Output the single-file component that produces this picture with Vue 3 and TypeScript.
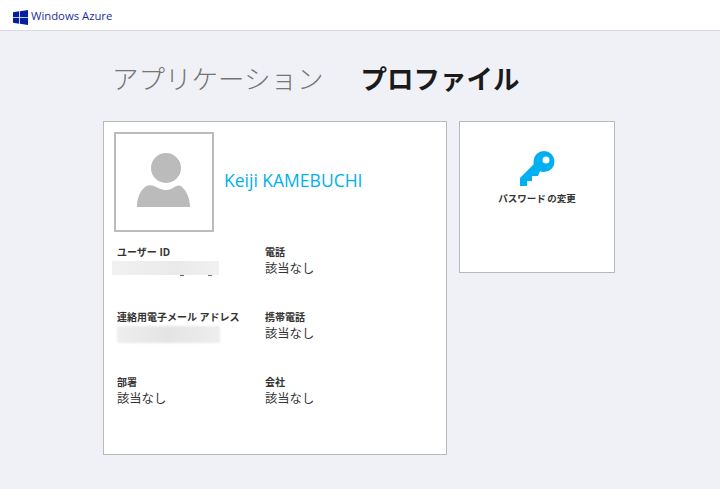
<script setup lang="ts">
interface Field {
  label: string
  value?: string
  redacted?: 'id' | 'mail'
}

const fields: Field[] = [
  { label: 'ユーザー ID', redacted: 'id' },
  { label: '電話', value: '該当なし' },
  { label: '連絡用電子メール アドレス', redacted: 'mail' },
  { label: '携帯電話', value: '該当なし' },
  { label: '部署', value: '該当なし' },
  { label: '会社', value: '該当なし' },
]
</script>

<template>
  <div class="page">
    <header class="topbar">
      <svg class="logo" viewBox="0 0 15 15" width="15" height="15">
        <path d="M0 2.200 6.200 1.300V7H0ZM7 1.200 15 0V7H7ZM0 7.800H6.200V13.700L0 12.800ZM7 7.800H15V15L7 13.800Z" fill="#00209f" />
      </svg>
      <span class="brand">Windows Azure</span>
    </header>

    <main class="content">
      <nav class="tabs">
        <span class="tab">アプリケーション</span>
        <span class="tab active">プロファイル</span>
      </nav>

      <div class="cards">
        <section class="card profile">
          <div class="identity">
            <div class="avatar">
              <svg viewBox="0 0 54 54" width="54" height="54">
                <circle cx="29" cy="15" r="15" fill="#bbb" />
                <path d="M0 54C0 45 3 38 8 34C11 32 14 32 17 33C21 35 25 37 29 37C33 37 36 35 39 33C42 32 44 32 46 35C50 39 53 46 53 54Z" fill="#bbb" />
              </svg>
            </div>
            <span class="name">Keiji KAMEBUCHI</span>
          </div>

          <dl class="fields">
            <div v-for="field in fields" :key="field.label" class="field">
              <dt>{{ field.label }}</dt>
              <dd v-if="field.redacted" :class="['redacted', field.redacted]"></dd>
              <dd v-else>{{ field.value }}</dd>
            </div>
          </dl>
        </section>

        <section class="card action">
          <svg class="key" viewBox="0 0 35 35" width="35" height="35">
            <path fill-rule="evenodd" d="M24 0A10.500 10.500 0 1 1 24 21C22.500 21 21 20.700 20 20.200L18 25H12V30H7V35H0V27L13.700 13.300C13.500 12.400 13.500 11.400 13.500 10.500A10.500 10.500 0 0 1 24 0ZM26 5.500A3.500 3.500 0 1 0 26 12.500A3.500 3.500 0 1 0 26 5.500Z" fill="#00b0f0" />
          </svg>
          <span class="action-label">パスワード の変更</span>
        </section>
      </div>
    </main>
  </div>
</template>

<style scoped>
.page {
  min-height: 489px;
  background: #f0f1f6;
  font-family: "Open Sans", "Noto Sans CJK JP", sans-serif;
  color: #333;
}

.topbar {
  display: flex;
  align-items: center;
  height: 30px;
  padding-left: 13px;
  background: #fff;
  border-bottom: 1px solid #d9dde3;
}

.logo {
  margin: 4px 3px 0 0;
}

.brand {
  font-size: 11.300px;
  color: #1a2f9c;
}

.content {
  padding: 30px 0 0 103px;
}

.tabs {
  display: flex;
  gap: 37px;
  padding-left: 9px;
  height: 60px;
  font-size: 26.500px;
  line-height: 36px;
}

.tab {
  color: #757575;
  font-weight: 300;
}

.tab.active {
  color: #1a1a1a;
  font-weight: 700;
}

.cards {
  display: flex;
  align-items: flex-start;
  gap: 12px;
}

.card {
  box-sizing: border-box;
  background: #fff;
  border: 1px solid #b9b9bd;
}

.profile {
  width: 344px;
  height: 334px;
  padding: 10px;
}

.identity {
  display: flex;
  align-items: center;
  gap: 10px;
}

.avatar {
  box-sizing: border-box;
  display: flex;
  align-items: center;
  justify-content: center;
  width: 100px;
  height: 100px;
  padding-bottom: 4px;
  border: 2px solid #bbb;
}

.name {
  margin-bottom: 4px;
  font-size: 17.500px;
  color: #00b0f0;
}

.fields {
  display: grid;
  grid-template-columns: 148px 1fr;
  grid-auto-rows: 65px;
  margin: 13px 0 0 3px;
}

.field dt {
  font-size: 10px;
  line-height: 14px;
  font-weight: 700;
  color: #333;
}

.field dd {
  margin: 2px 0 0;
  font-size: 12.300px;
  line-height: 16px;
  color: #333;
}

.field dd.redacted {
  position: relative;
  height: 14px;
  background: linear-gradient(90deg, #f1f1f1, #eaeaea 60%, #f1f1f1);
}

.field dd.redacted.id {
  width: 107px;
  margin: 2px 0 0 -5px;
}

/* leftover bits of the blurred address */
.field dd.redacted.id::after {
  content: "";
  position: absolute;
  left: 68px;
  top: 14px;
  width: 4px;
  height: 1px;
  background: #666;
  box-shadow: 28px 0 0 #777;
}

.field dd.redacted.mail {
  width: 103px;
  height: 17px;
  margin: 2px 0 0;
  background: linear-gradient(90deg, #eee, #e4e4e4 50%, #eee);
  filter: blur(1px);
}

.action {
  display: flex;
  flex-direction: column;
  align-items: center;
  width: 156px;
  height: 152px;
  padding-top: 29px;
}

.key {
  margin-left: 1px;
}

.action-label {
  margin-top: 6px;
  font-size: 9.500px;
  line-height: 14px;
  font-weight: 700;
  word-spacing: -1px;
  color: #333;
}
</style>
